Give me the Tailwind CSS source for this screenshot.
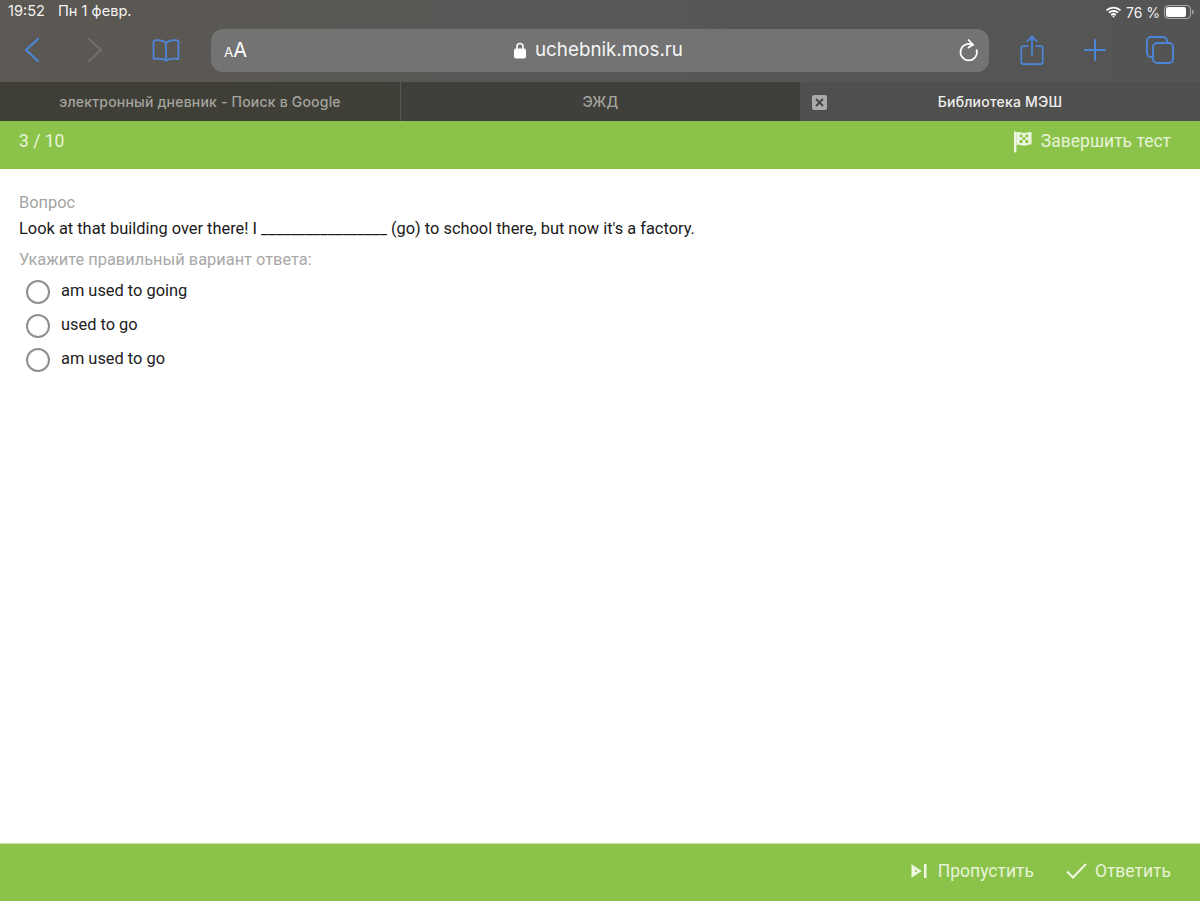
<!DOCTYPE html>
<html><head><meta charset="utf-8"><script src="https://cdn.jsdelivr.net/npm/@tailwindcss/browser@4"></script></head>
<body class="m-0 bg-white">
<div class="w-[1200px] h-[901px] flex flex-col overflow-hidden font-['Roboto',sans-serif]">
  <header class="h-[121px] shrink-0 flex flex-col bg-gradient-to-r from-[#5c5853] via-[#575756] to-[#545454] font-['Inter',sans-serif]">
    <div class="h-[24px] flex items-center justify-between pl-[8px] pr-[6px] text-white/95 text-[14.600px]">
      <div class="flex gap-[13px]"><span>19:52</span><span>Пн 1 февр.</span></div>
      <div class="flex items-center gap-[4px]">
        <svg width="17" height="12" viewBox="0 0 16 12" fill="none" stroke="#fff" stroke-width="1.800"><path d="M1 4.300C5 .6 11 .6 15 4.300M3.400 6.700c2.600-2.300 6.600-2.300 9.200 0M5.700 9c1.300-1.100 3.300-1.100 4.600 0"/><circle cx="8" cy="10.600" r="1" fill="#fff" stroke="none"/></svg>
        <span class="text-[14px]">76 %</span>
        <svg width="30" height="14" viewBox="0 0 30 14"><rect x=".5" y=".5" width="26" height="13" rx="3.500" fill="none" stroke="#aaa"/><rect x="2" y="2" width="20" height="10" rx="2" fill="#fff"/><rect x="28" y="5" width="1.500" height="4" rx=".7" fill="#aaa"/></svg>
      </div>
    </div>
    <div class="h-[58px] pb-[6px] flex items-center relative">
      <svg class="ml-[23px]" width="18" height="26" viewBox="0 0 18 26" fill="none" stroke="#4d86d8" stroke-width="2.200" stroke-linecap="round" stroke-linejoin="round"><path d="M15 2 3 13l12 11"/></svg>
      <svg class="ml-[45px]" width="18" height="26" viewBox="0 0 18 26" fill="none" stroke="#6f6f6e" stroke-width="2.200" stroke-linecap="round" stroke-linejoin="round"><path d="m3 2 12 11L3 24"/></svg>
      <svg class="ml-[48px]" width="28" height="24" viewBox="0 0 28 24" fill="none" stroke="#4d86d8" stroke-width="1.800" stroke-linejoin="round"><path d="M14 5C11.500 2.300 6 1.700 2.500 2.500c-.6.2-1 .6-1 1.200V20c0 .6.500 1 1 1C6 20.400 11 20.500 14 22.500 17 20.500 22 20.400 25.500 21c.5 0 1-.4 1-1V3.700c0-.6-.4-1-1-1.200C22 1.700 16.500 2.300 14 5Zm0 0v17"/></svg>
      <div class="ml-[31px] w-[778px] h-[43px] rounded-[12px] bg-[#737373] flex items-center justify-between pl-[13px] pr-[10px] relative">
        <span class="text-white text-[20px] leading-none"><span class="text-[13.500px]">A</span>A</span>
        <div class="absolute left-[303px] top-0 h-full flex items-center gap-[9px] text-[#f5f5f5] text-[18.800px]">
          <svg width="12" height="17" viewBox="0 0 12 17"><path d="M3 7V4.500a3 3 0 0 1 6 0V7" fill="none" stroke="#fff" stroke-width="1.600"/><rect y="6.500" width="12" height="10" rx="2" fill="#fff"/></svg>
          <span>uchebnik.mos.ru</span>
        </div>
        <svg width="21" height="24" viewBox="0 0 21 24" fill="none" stroke="#fff" stroke-width="1.700" stroke-linecap="round" stroke-linejoin="round"><path d="M15 7.200A8.200 8.200 0 1 0 18.600 12"/><path d="M10.500 2 15 6.500 10.500 9.500"/></svg>
      </div>
      <svg class="ml-[31px]" width="24" height="31" viewBox="0 0 24 32" fill="none" stroke="#4d86d8" stroke-width="1.800" stroke-linecap="round" stroke-linejoin="round"><path d="M7.500 11.500H3a2 2 0 0 0-2 2V28a2 2 0 0 0 2 2h18a2 2 0 0 0 2-2V13.500a2 2 0 0 0-2-2h-4.500M12 21V2M7 6.500 12 1.500l5 5"/></svg>
      <svg class="ml-[39px]" width="24" height="24" viewBox="0 0 24 24" fill="none" stroke="#4d86d8" stroke-width="2" stroke-linecap="round"><path d="M12 2v20M2 12h20"/></svg>
      <svg class="ml-[38px]" width="30" height="30" viewBox="0 0 30 30" fill="none" stroke="#4d86d8" stroke-width="1.900" stroke-linejoin="round"><rect x="8" y="8" width="20" height="20" rx="4"/><path d="M8 22H6a4 4 0 0 1-4-4V6a4 4 0 0 1 4-4h12a4 4 0 0 1 4 4v2"/></svg>
    </div>
    <div class="h-[39px] flex text-[14px] font-medium tracking-[0.2px]">
      <div class="w-[401px] bg-[#3f3e37] text-[#a5a59f] flex items-center justify-center border-r border-[#5a5a55]">электронный дневник - Поиск в Google</div>
      <div class="w-[399px] bg-[#3f403b] text-[#a5a59f] flex items-center justify-center">ЭЖД</div>
      <div class="flex-1 bg-[#4f4f4d] text-[#f0f0f0] flex items-center relative justify-center">
        <span class="absolute left-[12px] top-[13px] w-[15px] h-[15px] rounded-[2px] bg-[#a9a9a7] flex items-center justify-center"><svg width="9" height="9" viewBox="0 0 9 9" stroke="#444" stroke-width="1.800"><path d="m1 1 7 7M8 1 1 8"/></svg></span>
        <span>Библиотека МЭШ</span>
      </div>
    </div>
  </header>
  <div class="h-[48px] shrink-0 bg-[#8bc34a] flex items-center justify-between pb-[8px] pl-[19px] pr-[29px] text-[#e8f3d9] text-[17.500px]">
    <span>3 / 10</span>
    <span class="flex items-center gap-[9px]">
      <svg width="18" height="23" viewBox="0 0 19 23"><rect x="0" y="1" width="2.500" height="22" fill="#eef7e2"/><path d="M2.500 2c3-1.500 5 .5 8 .5 3 0 5-1 8-1v13c-3 0-5 1.500-8 1.500-3 0-5-2-8-.5z" fill="#eef7e2"/><path d="M6 4h3v3H6zM12 4h3v3h-3zM9 7h3v3H9zM6 10h3v3H6zM12 10h3v3h-3z" fill="#8bc34a"/></svg>
      Завершить тест
    </span>
  </div>
  <main class="flex-1 pt-[24px] pl-[19px] text-[16.400px]">
    <div class="text-[#a3a3a3] leading-[20px]">Вопрос</div>
    <div class="text-[#1a1a1a] leading-[20px] mt-[6px]">Look at that building over there! I _________________ (go) to school there, but now it's a factory.</div>
    <div class="text-[#a8a8a8] leading-[20px] mt-[11px]">Укажите правильный вариант ответа:</div>
    <div class="flex flex-col gap-[10px] mt-[9px] pl-[7px] text-[#212121]">
      <label class="h-[24px] flex items-center gap-[11px]"><span class="w-[24px] h-[24px] rounded-full border-2 border-[#8f8f8f] relative top-[1px]"></span><span>am used to going</span></label>
      <label class="h-[24px] flex items-center gap-[11px]"><span class="w-[24px] h-[24px] rounded-full border-2 border-[#8f8f8f] relative top-[1px]"></span><span>used to go</span></label>
      <label class="h-[24px] flex items-center gap-[11px]"><span class="w-[24px] h-[24px] rounded-full border-2 border-[#8f8f8f] relative top-[1px]"></span><span>am used to go</span></label>
    </div>
  </main>
  <footer class="h-[58px] shrink-0 bg-[#8bc34a] border-t border-[#c9dfae] pb-[3px] flex items-center justify-end gap-[32px] pr-[29px] text-[#e8f3d9] text-[17.500px]">
    <span class="flex items-center gap-[11px]"><svg width="16" height="14" viewBox="0 0 16 14"><path d="M1.500 2l7.500 5-7.500 5z" fill="#eef7e2" stroke="#eef7e2" stroke-width="2"/><path d="M4 5.500l2.500 1.500L4 8.500z" fill="#8bc34a"/><rect x="13" y="0" width="2.500" height="14" fill="#eef7e2"/></svg>Пропустить</span>
    <span class="flex items-center gap-[8px]"><svg width="21" height="16" viewBox="0 0 21 16" fill="none" stroke="#eef7e2" stroke-width="2"><path d="m1 8.500 6 6L20 1"/></svg>Ответить</span>
  </footer>
</div>
</body></html>
